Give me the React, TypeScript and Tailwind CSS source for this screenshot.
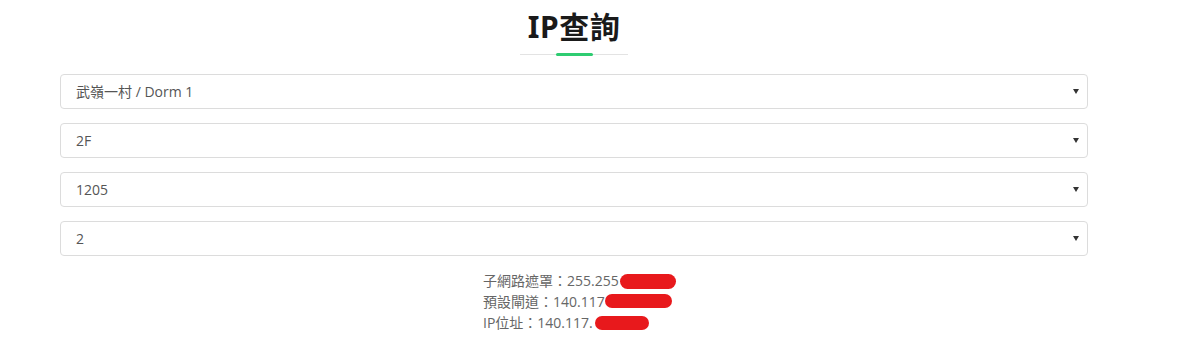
const selects = ['武嶺一村 / Dorm 1', '2F', '1205', '2'];

function FakeSelect({ value }: { value: string }) {
  return (
    <div className="h-[35px] w-full rounded-[4px] border border-[#dcdcdc] bg-white pl-[15px] pr-[8px] flex items-center justify-between text-[14px] text-[#555]">
      <span>{value}</span>
      <span className="w-0 h-0 border-l-[3px] border-r-[3px] border-t-[5px] border-l-transparent border-r-transparent border-t-[#333]" />
    </div>
  );
}

export default function App() {
  return (
    <div
      className="w-[1200px] h-[339px] bg-white overflow-hidden"
      style={{ fontFamily: '"Open Sans", "Noto Sans CJK TC", sans-serif' }}
    >
      <div className="ml-[60px] w-[1028px]">
        <div className="flex flex-col items-center pt-[7px]">
          <h1
            className="text-[30px] font-bold leading-[40px] text-[#1a1a1a] tracking-[0.5px]"
            style={{ fontFamily: '"Noto Sans", "Noto Sans CJK TC", sans-serif' }}
          >
            IP查詢
          </h1>
          <div className="relative mt-[7px] w-[108px] h-px bg-[#e3e3e3]">
            <div className="absolute left-[36px] top-[-1px] w-[37px] h-[3px] rounded-full bg-[#2ecc71]" />
          </div>
        </div>

        <div className="mt-[19px] flex flex-col gap-[14px]">
          {selects.map((v) => (
            <FakeSelect key={v} value={v} />
          ))}
        </div>

        <div className="flex justify-center mt-[14px] pl-[10px]">
          <div className="text-[14px] leading-[21px] text-[#666] w-[192px]">
            <div className="relative">
              子網路遮罩：255.255
              <span className="absolute left-[137px] top-[4px] w-[56px] h-[15px] rounded-full bg-[#e8191c]" />
            </div>
            <div className="relative">
              預設閘道：140.117
              <span className="absolute left-[122px] top-[3px] w-[67px] h-[14px] rounded-full bg-[#e8191c]" />
            </div>
            <div className="relative">
              IP位址：140.117.
              <span className="absolute left-[112px] top-[4px] w-[54px] h-[14px] rounded-full bg-[#e8191c]" />
            </div>
          </div>
        </div>
      </div>
    </div>
  );
}
